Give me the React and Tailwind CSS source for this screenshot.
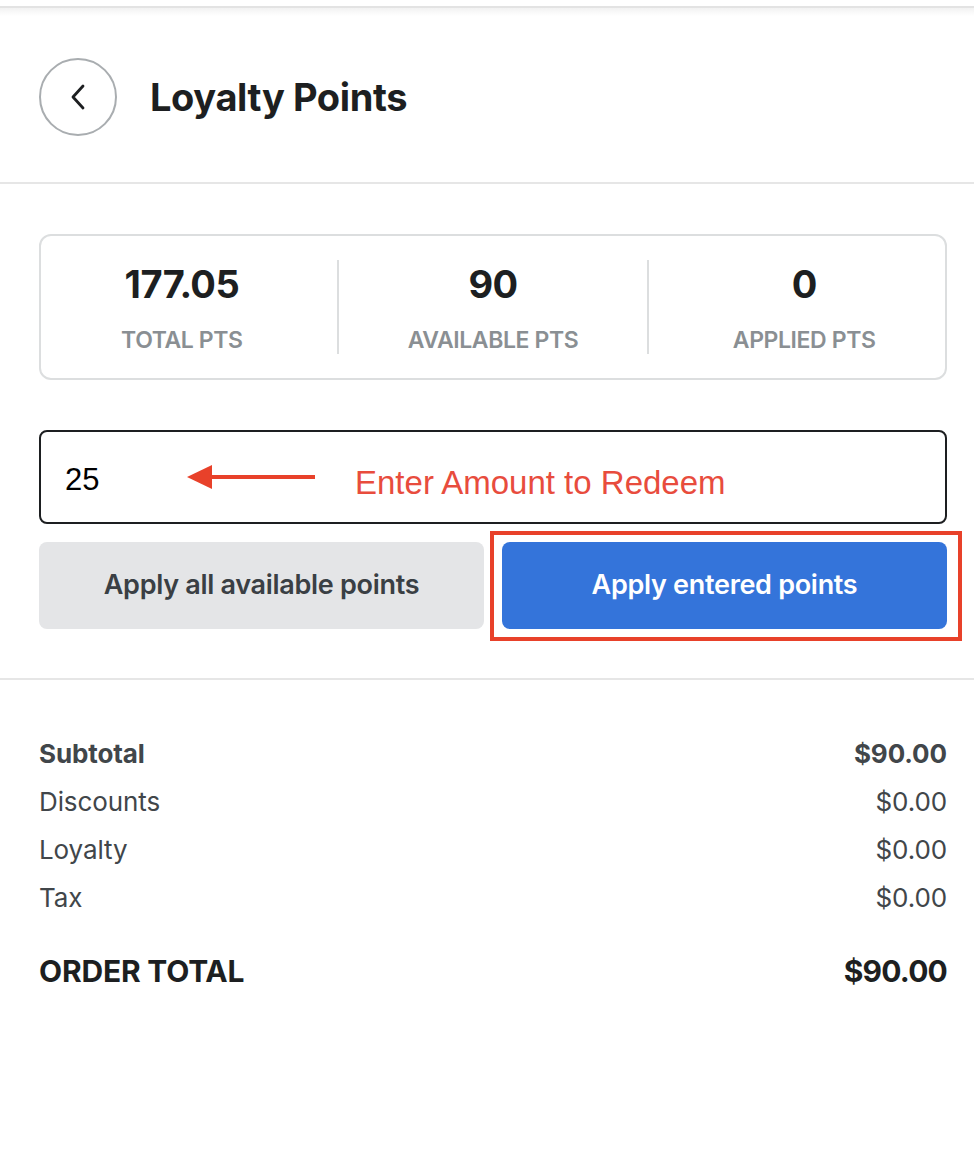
import React from 'react';

const stats = [
  { value: '177.05', label: 'TOTAL PTS', pad: 'pr-[14px]' },
  { value: '90', label: 'AVAILABLE PTS', pad: 'border-x-2 border-[#dcdedf]' },
  { value: '0', label: 'APPLIED PTS', pad: 'pl-[14px]' },
];

const lines = [
  { label: 'Subtotal', amount: '$90.00', bold: true },
  { label: 'Discounts', amount: '$0.00' },
  { label: 'Loyalty', amount: '$0.00' },
  { label: 'Tax', amount: '$0.00' },
];

const ChevronLeft = () => (
  <svg width="20" height="28" viewBox="0 0 20 28" fill="none">
    <path d="M15 3 L5 14 L15 25" stroke="#1d1f21" strokeWidth="2.8" strokeLinecap="round" strokeLinejoin="round" />
  </svg>
);

const RedArrow = () => (
  <svg width="130" height="26" viewBox="0 0 130 26">
    <polygon points="0,13 25,1 25,25" fill="#e8412a" />
    <rect x="24" y="11" width="104" height="4" fill="#e8412a" />
  </svg>
);

export default function App() {
  return (
    <div className="min-h-[1158px] w-full bg-white text-[#1d1f21]" style={{ fontFamily: 'Inter, "Open Sans", sans-serif' }}>
      {/* Top shadow strip */}
      <div className="h-[6px] bg-white" />
      <div className="h-[2px] bg-[#e3e3e3]" />
      <div className="h-[8px] bg-gradient-to-b from-[#f2f2f2] to-white" />

      {/* Header */}
      <header className="flex h-[168px] items-center gap-[33px] border-b-2 border-[#e6e6e6] pl-[39px] pr-[27px] pb-[4px]">
        <button className="flex h-[78px] w-[78px] items-center justify-center rounded-full border-2 border-[#a9adb0] bg-white">
          <ChevronLeft />
        </button>
        <h1 className="text-[38px] font-bold tracking-[-0.4px]">Loyalty Points</h1>
      </header>

      <section className="border-b-2 border-[#e6e6e6] pl-[39px] pr-[27px] pb-[49px] pt-[50px]">
        {/* Stats card */}
        <div className="grid h-[146px] grid-cols-[297fr_314fr_297fr] items-center rounded-[12px] border-2 border-[#dcdedf]">
          {stats.map((s) => (
            <div key={s.label} className={`flex h-[94px] flex-col items-center justify-between ${s.pad}`}>
              <div className="text-[38px] font-bold leading-[48px] tracking-[-0.6px]">{s.value}</div>
              <div className="text-[23px] font-semibold leading-[28px] tracking-[-0.4px] text-[#8a8f93]">{s.label}</div>
            </div>
          ))}
        </div>

        {/* Amount input */}
        <div
          className="mt-[50px] flex h-[94px] items-center rounded-[8px] border-2 border-[#1d1f21] pl-[24px]"
          style={{ fontFamily: '"Liberation Sans", Arial, sans-serif' }}
        >
          <span className="mt-[6px] w-[122px] text-[31px] text-black">25</span>
          <RedArrow />
          <span className="ml-[38px] mt-[12px] text-[33px] text-[#e84c3d]">Enter Amount to Redeem</span>
        </div>

        {/* Buttons */}
        <div className="mt-[18px] flex gap-[18px]">
          <button className="h-[87px] flex-1 rounded-[8px] bg-[#e4e5e7] text-[27px] font-semibold tracking-[-0.3px] text-[#3a3f44]">
            Apply all available points
          </button>
          <div className="relative flex-1">
            <button className="h-[87px] w-full rounded-[8px] bg-[#3474da] text-[27px] font-semibold tracking-[-0.3px] text-white">
              Apply entered points
            </button>
            <div className="pointer-events-none absolute -bottom-[12px] -left-[12px] -right-[15px] -top-[11px] border-4 border-[#e8412a]" />
          </div>
        </div>
      </section>

      {/* Summary */}
      <section className="pl-[39px] pr-[27px] pt-[49px]">
        {lines.map((l) => (
          <div
            key={l.label}
            className={`flex h-[48px] items-center justify-between text-[26px] tracking-[-0.1px] text-[#41464a] ${l.bold ? 'font-bold' : ''}`}
          >
            <span>{l.label}</span>
            <span>{l.amount}</span>
          </div>
        ))}
        <div className="mt-[33px] flex h-[34px] items-center justify-between text-[30px] font-bold tracking-[-0.2px] text-[#1d1f21]">
          <span>ORDER TOTAL</span>
          <span className="tracking-[-0.8px]">$90.00</span>
        </div>
      </section>
    </div>
  );
}
